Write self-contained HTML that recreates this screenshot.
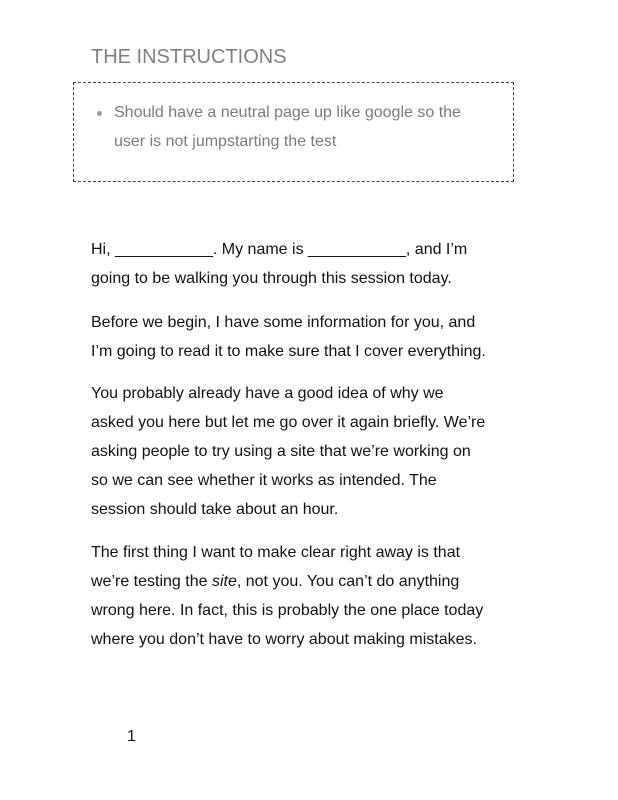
<!DOCTYPE html>
<html><head><meta charset="utf-8"><style>
body{margin:0;width:618px;height:800px;background:#fff;position:relative;font-family:"Liberation Sans",Arial,sans-serif;overflow:hidden}
.l{position:absolute;left:91px;font-size:16px;line-height:20px;color:#111;white-space:nowrap}
.g{color:#7a7a7a}
</style></head><body>
<div class="l g" style="top:45px;font-size:20px;line-height:24px;color:#808080">THE INSTRUCTIONS</div>
<div style="position:absolute;left:73px;top:82px;width:439px;height:98px;border:1px dashed #444"></div>
<div style="position:absolute;left:97px;top:111px;width:5px;height:5px;border-radius:50%;background:#999"></div>
<div class="l g" style="left:114px;top:103px">Should have a neutral page up like google so the</div>
<div class="l g" style="left:114px;top:132px">user is not jumpstarting the test</div>

<div class="l" style="top:240px">Hi, ___________. My name is ___________, and I’m</div>
<div class="l" style="top:269px">going to be walking you through this session today.</div>
<div class="l" style="top:313px">Before we begin, I have some information for you, and</div>
<div class="l" style="top:342px">I’m going to read it to make sure that I cover everything.</div>
<div class="l" style="top:384px">You probably already have a good idea of why we</div>
<div class="l" style="top:413px">asked you here but let me go over it again briefly. We’re</div>
<div class="l" style="top:442px">asking people to try using a site that we’re working on</div>
<div class="l" style="top:471px">so we can see whether it works as intended. The</div>
<div class="l" style="top:500px">session should take about an hour.</div>
<div class="l" style="top:543px">The first thing I want to make clear right away is that</div>
<div class="l" style="top:572px">we’re testing the <i>site</i>, not you. You can’t do anything</div>
<div class="l" style="top:601px">wrong here. In fact, this is probably the one place today</div>
<div class="l" style="top:630px">where you don’t have to worry about making mistakes.</div>
<div class="l" style="left:127px;top:727px">1</div>
</body></html>
